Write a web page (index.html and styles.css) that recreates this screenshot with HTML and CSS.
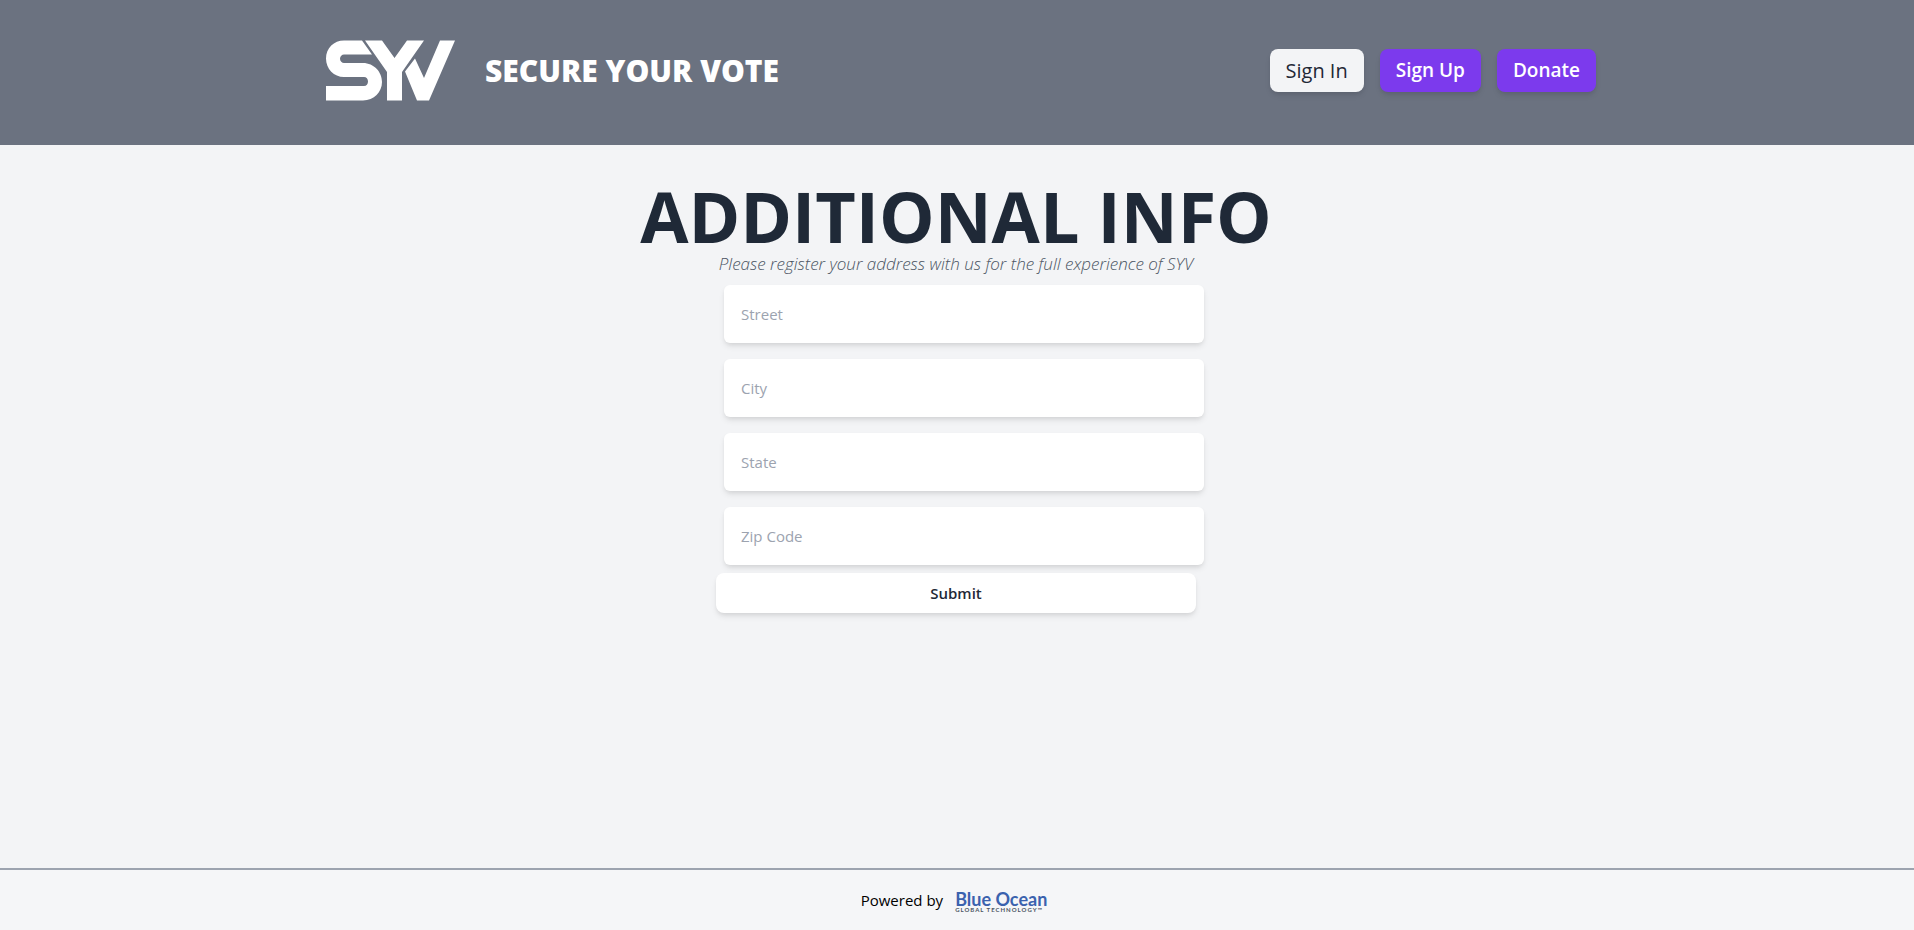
FILE: index.html
```html
<!DOCTYPE html>
<html lang="en">
<head>
<meta charset="utf-8">
<title>Secure Your Vote</title>
<link rel="stylesheet" href="styles.css">
</head>
<body>
<header class="site-header">
  <div class="header-inner">
    <a class="brand" href="#">
      <svg class="brand-logo" viewBox="0 0 129 61" role="img" aria-label="SYV">
        <path d="M36 0.500H18C8 .5 0 8 0 18.500S8 37 18 37H38C40.500 37 42 39 42 41.500S40.500 46 38 46H0V60.500H37C48 60.500 56 52 56 42S48 23 37 23H18C16 23 14 21.500 14 18.800S16 14.500 18 14.500H46Z"/>
        <path d="M39 .5H56L68.500 18 81 .5H98L76 32V60.500H61V32Z"/>
        <path d="M89 18.500 98 38 114 .5H129L103 60.500H91L79 31.500Z"/>
      </svg>
      <span class="brand-name">SECURE YOUR VOTE</span>
    </a>
    <nav class="actions">
      <button class="btn btn-light" type="button">Sign In</button>
      <button class="btn btn-primary" type="button">Sign Up</button>
      <button class="btn btn-primary" type="button">Donate</button>
    </nav>
  </div>
</header>
<main class="content">
  <h1 class="title">ADDITIONAL INFO</h1>
  <p class="subtitle">Please register your address with us for the full experience of SYV</p>
  <form class="form">
    <input class="field" type="text" placeholder="Street" aria-label="Street">
    <input class="field" type="text" placeholder="City" aria-label="City">
    <input class="field" type="text" placeholder="State" aria-label="State">
    <input class="field" type="text" placeholder="Zip Code" aria-label="Zip Code">
    <button class="submit" type="submit">Submit</button>
  </form>
</main>
<footer class="site-footer">
  <span>Powered by</span>
  <a class="sponsor" href="#">
    <span class="sponsor-name">Blue Ocean</span>
    <span class="sponsor-tag">GLOBAL TECHNOLOGY™</span>
  </a>
</footer>
</body>
</html>
```
FILE: styles.css
```css
* { box-sizing: border-box; }

body {
  display: flex;
  flex-direction: column;
  min-height: 100vh;
  margin: 0;
  background: #f3f4f6;
  color: #000;
  font-family: "Segoe UI", "Open Sans", "Noto Sans", sans-serif;
  font-size: 16px;
  line-height: 24px;
}

button, input { font: inherit; border: 0; }
a { color: inherit; text-decoration: none; }

.site-header {
  background: #6b7280;
  padding: 40px 24px 44px 32px;
}

.header-inner {
  display: flex;
  justify-content: space-between;
  align-items: center;
  max-width: 1270px;
  margin: 0 auto;
}

.brand { display: flex; align-items: center; gap: 30px; }
.brand-logo { width: 129px; height: 61px; fill: #fff; }
.brand-name {
  color: #fff;
  font-size: 30px;
  font-weight: 800;
  line-height: 40px;
}

.actions { display: flex; gap: 16px; }
.btn {
  padding: 8px 16px;
  border-radius: 8px;
  font-size: 19px;
  font-weight: 600;
  line-height: 27px;
  box-shadow: 0 4px 6px -1px rgba(0, 0, 0, .1), 0 2px 4px -1px rgba(0, 0, 0, .06);
}
.btn-light { background: #f3f4f6; color: #1f2937; font-size: 20px; font-weight: 500; }
.btn-primary { background: #7c3aed; color: #fff; }

.content {
  flex: 1;
  display: flex;
  flex-direction: column;
  align-items: center;
  padding: 36px 18px 32px 16px;
}
.title {
  margin: 0;
  color: #1f2937;
  font-size: 70px;
  font-weight: 700;
  line-height: 70px;
}
.subtitle {
  margin: 0;
  color: #4b5563;
  font-size: 17px;
  font-style: italic;
  font-weight: 300;
  line-height: 26px;
}
.form { display: flex; flex-direction: column; width: 100%; max-width: 480px; }
.field {
  width: 100%;
  height: 58px;
  margin: 8px;
  padding: 16px;
  border: 1px solid transparent;
  border-radius: 6px;
  background: #fff;
  font-size: 15px;
}
.field::placeholder { color: #9ca3af; opacity: 1; }
.field, .submit {
  box-shadow: 0 4px 6px -1px rgba(0, 0, 0, .1), 0 2px 4px -1px rgba(0, 0, 0, .06);
}
.submit {
  padding: 8px 16px;
  border-radius: 8px;
  background: #fff;
  color: #1f2937;
  font-size: 15px;
  font-weight: 600;
}

.site-footer {
  display: flex;
  justify-content: center;
  align-items: center;
  gap: 12px;
  height: 62px;
  padding-right: 6px;
  border-top: 2px solid #9ca3af;
  background: #f5f6f8;
  font-size: 15px;
}
.sponsor { display: flex; flex-direction: column; padding-top: 4px; font-family: Lato, sans-serif; }
.sponsor-name { color: #3b62ae; font-size: 18px; font-weight: 700; line-height: 16px; }
.sponsor-tag { color: #4b5563; font-size: 6px; font-weight: 700; line-height: 6px; letter-spacing: 1px; }
```
